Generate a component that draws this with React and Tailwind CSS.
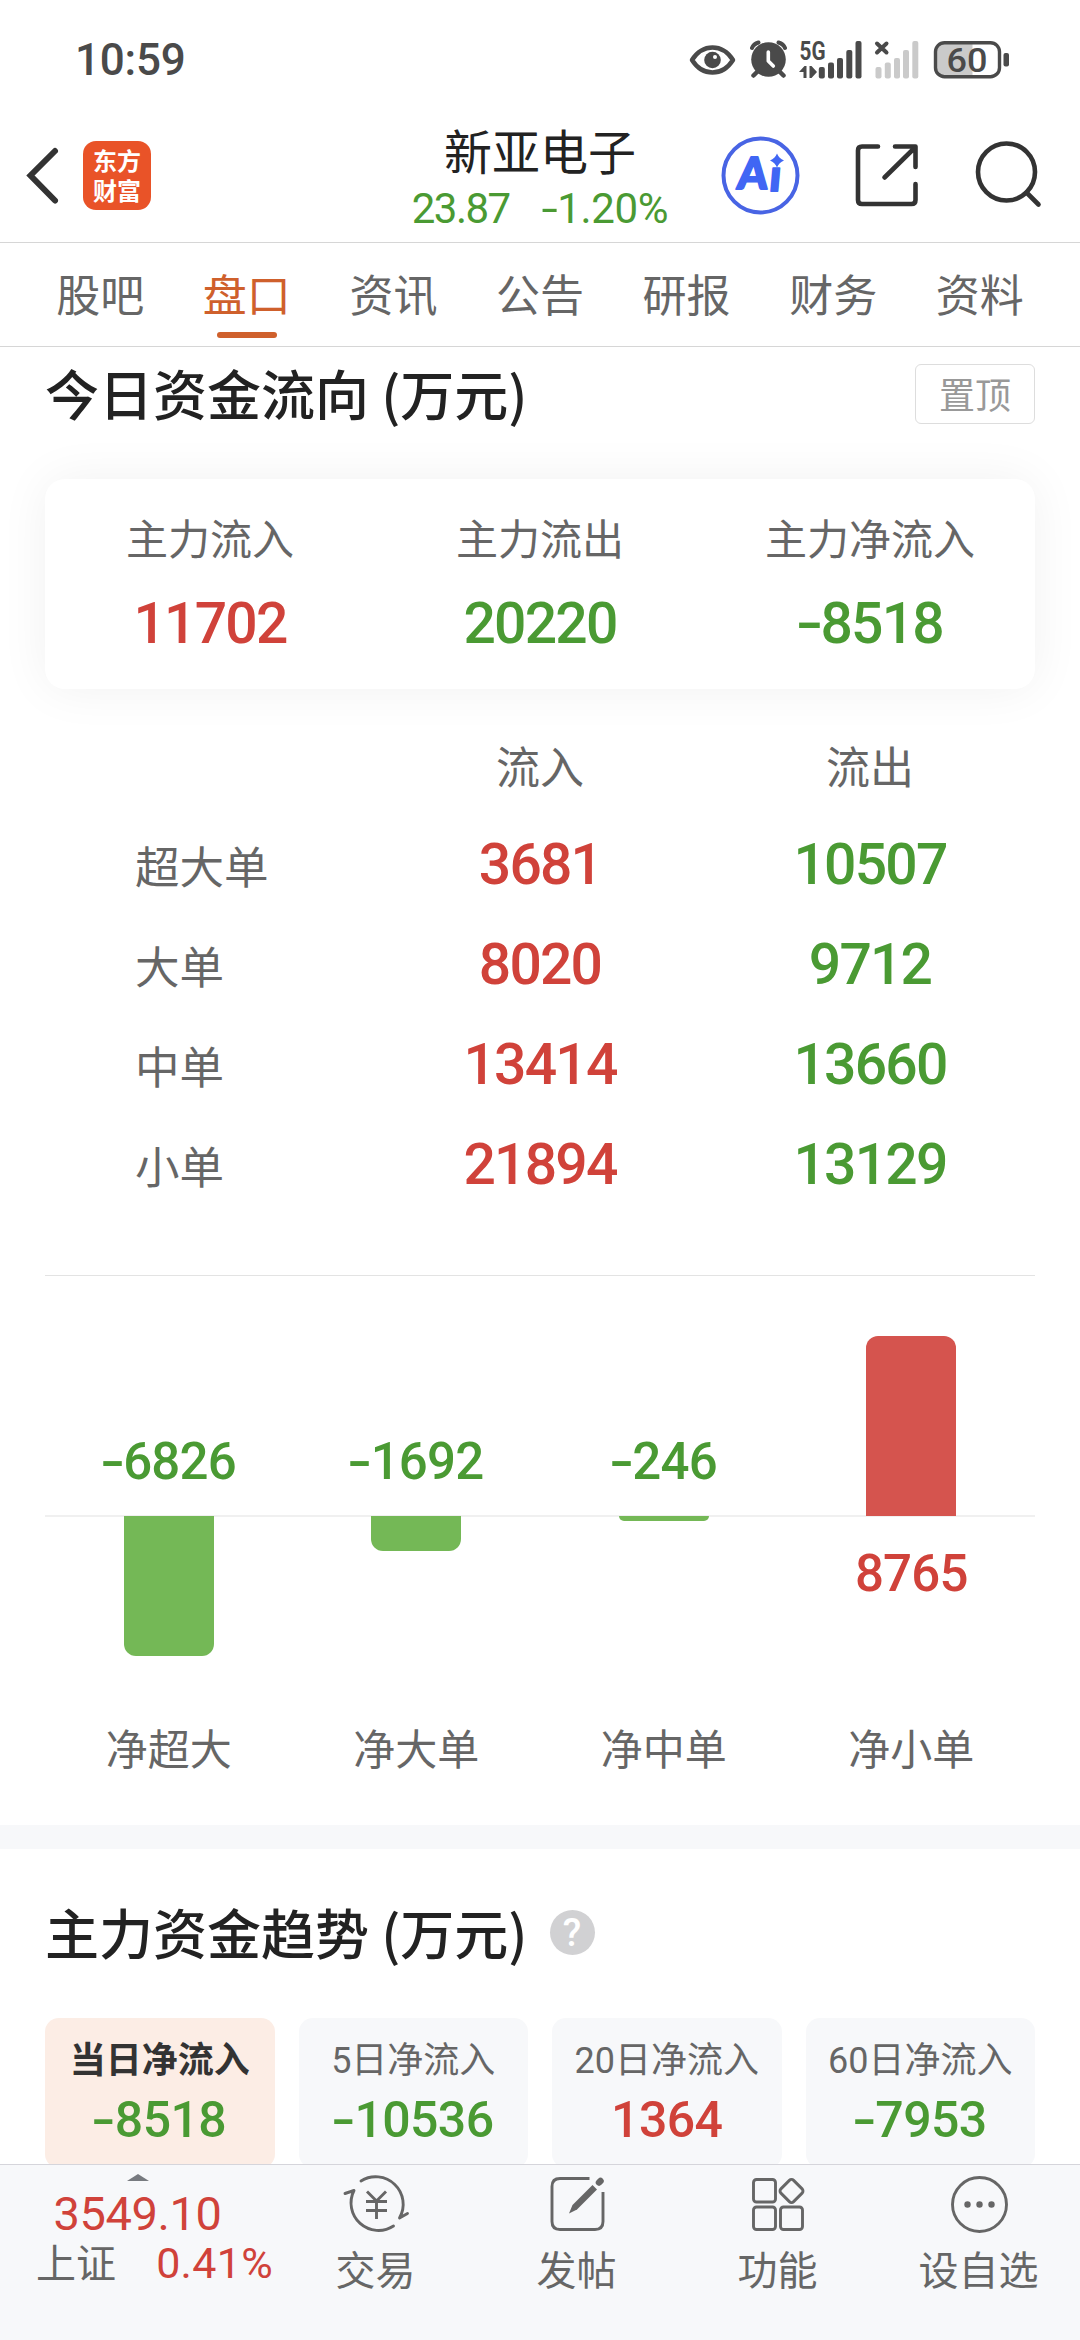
import clsx from "clsx";

const RED = "text-[#d0423a]";
const GREEN = "text-[#4a9a33]";

const tabs = ["股吧", "盘口", "资讯", "公告", "研报", "财务", "资料"];

const summary = [
  { label: "主力流入", value: "11702", up: true },
  { label: "主力流出", value: "20220", up: false },
  { label: "主力净流入", value: "-8518", up: false },
];

const orders = [
  { label: "超大单", inflow: "3681", outflow: "10507" },
  { label: "大单", inflow: "8020", outflow: "9712" },
  { label: "中单", inflow: "13414", outflow: "13660" },
  { label: "小单", inflow: "21894", outflow: "13129" },
];

const nets = [
  { label: "净超大", value: -6826, height: 140 },
  { label: "净大单", value: -1692, height: 35 },
  { label: "净中单", value: -246, height: 5 },
  { label: "净小单", value: 8765, height: 180 },
];

const trends = [
  { label: "当日净流入", value: "-8518", active: true },
  { label: "5日净流入", value: "-10536" },
  { label: "20日净流入", value: "1364", up: true },
  { label: "60日净流入", value: "-7953" },
];

// Roboto's hyphen is short, so the minus sign is widened a little
function Num({ children, className }) {
  const text = String(children);
  const negative = text.startsWith("-");
  return (
    <span className={clsx("font-['Roboto','Noto_Sans_CJK_SC',sans-serif] leading-none whitespace-nowrap", className)}>
      {negative && <span className="ml-[0.1em] inline-block origin-right scale-x-[1.4]">-</span>}
      {negative ? text.slice(1) : text}
    </span>
  );
}

function StatusBar() {
  return (
    <div className="flex h-[108px] items-start justify-between pl-[75px] pr-[70px] pt-[36px] text-[#4a4a4a]">
      <Num className="mt-[2px] text-[44px] font-medium tracking-[-0.2px]">10:59</Num>
      <svg className="h-[48px] w-[322px]" viewBox="688 36 322 48" fill="none">
        <path d="M692 60Q700 47.500 712.500 47.500T733 60Q725 72.500 712.500 72.500T692 60Z" stroke="#4a4a4a" strokeWidth="4.500" strokeLinejoin="round" />
        <circle cx="712.500" cy="60" r="8.300" fill="#4a4a4a" />
        <circle cx="715" cy="57" r="2" fill="#fff" />
        <g stroke="#4a4a4a" strokeLinecap="round">
          <path d="M752 48q1.500-4 6.500-5.500M785 48q-1.500-4-6.500-5.500" strokeWidth="4" />
          <path d="M758 71l-4.500 4.500M779 71l4.500 4.500" strokeWidth="4.500" />
        </g>
        <circle cx="768.500" cy="59.500" r="17.300" fill="#4a4a4a" />
        <path d="M768.300 52v9l5 5" stroke="#fff" strokeWidth="3.600" strokeLinecap="round" strokeLinejoin="round" />
        <text x="799.500" y="60" fontFamily="Roboto" fontWeight="700" fontSize="25.500" textLength="26" lengthAdjust="spacingAndGlyphs" fill="#4a4a4a">5G</text>
        <path d="M799 72l5.500-6h2v12h-3v-6zM809.500 66h2l5.500 6-5.500 6h-2z" fill="#4a4a4a" />
        <g fill="#4a4a4a">
          <rect x="818.800" y="67" width="6" height="11.500" rx="2" />
          <rect x="828" y="62.500" width="6" height="16" rx="2" />
          <rect x="837" y="58" width="6" height="20.500" rx="2" />
          <rect x="846.300" y="50" width="6" height="28.500" rx="2" />
          <rect x="855.500" y="41" width="6" height="37.500" rx="2" />
        </g>
        <path d="M877 43.500l9.500 9M886.500 43.500l-9.500 9" stroke="#4a4a4a" strokeWidth="4" strokeLinecap="round" />
        <g fill="#cacaca">
          <rect x="875.500" y="67" width="6" height="11.500" rx="2" />
          <rect x="884.800" y="62.500" width="6" height="16" rx="2" />
          <rect x="894" y="58" width="6" height="20.500" rx="2" />
          <rect x="903" y="50" width="6" height="28.500" rx="2" />
          <rect x="912.300" y="41" width="6" height="37.500" rx="2" />
        </g>
        <path d="M943 43h29.500v34h-29.500q-7 0-7-7v-20q0-7 7-7z" fill="#cacaca" />
        <rect x="935.500" y="42.700" width="64" height="34" rx="9" stroke="#4a4a4a" strokeWidth="3.400" />
        <rect x="1003.500" y="53" width="5.500" height="13.500" rx="2" fill="#4a4a4a" />
        <text x="946.500" y="71.500" fontFamily="Roboto" fontWeight="500" fontSize="34" textLength="41" lengthAdjust="spacingAndGlyphs" fill="#4a4a4a">60</text>
      </svg>
    </div>
  );
}

function Header() {
  return (
    <header className="flex h-[135px] items-start border-b border-[#d6d6d6]">
      <div className="flex w-[380px] items-center pl-[26px] pt-[33px]">
        <svg className="h-[68px] w-[34px]" viewBox="0 0 34 68" fill="none">
          <path d="M29 9L4.500 33.500l24.500 25" stroke="#333" strokeWidth="6" strokeLinecap="round" />
        </svg>
        <div className="ml-[23px] flex h-[69px] w-[68px] flex-col items-center justify-center rounded-[13px] bg-[#e95328] pb-[2px] text-[24px] font-bold leading-[30px] text-white">
          <span>东方</span>
          <span>财富</span>
        </div>
      </div>
      <div className="flex w-[320px] flex-col items-center pt-[16px]">
        <h1 className="text-[48px] leading-[50px] text-[#222]">新亚电子</h1>
        <div className={clsx("mt-[14px] flex gap-[32px] text-[42px]", GREEN)}>
          <Num className="tracking-[-1.5px]">23.87</Num>
          <Num className="tracking-[-0.3px]">-1.20%</Num>
        </div>
      </div>
      <svg className="h-[134px] w-[380px]" viewBox="700 108 380 134" fill="none">
        <circle cx="760.500" cy="175.500" r="37" stroke="#4864e4" strokeWidth="4" />
        <g fontFamily="Lato" fontWeight="900" fontSize="44" fill="#4066f4" stroke="#4066f4" strokeWidth="2" strokeLinejoin="round">
          <text transform="translate(736.500 189) skewX(-5)" textLength="30" lengthAdjust="spacingAndGlyphs">A</text>
          <text transform="translate(768.500 191) skewX(-5)">ı</text>
        </g>
        <path d="M777 153.500q2 5 7 7-5 2-7 7-2-5-7-7 5-2 7-7z" fill="#4066f4" />
        <g stroke="#333" strokeWidth="4.600" strokeLinecap="round" strokeLinejoin="round">
          <path d="M878 146.500h-16q-4 0-4 4v49.500q0 4 4 4h49.500q4 0 4-4V184M895 146.500h20.500V167M914 148.500L884.500 177.500" />
          <circle cx="1006.500" cy="172" r="28.500" />
          <path d="M1026.500 192.500L1038.500 204.500" />
        </g>
      </svg>
    </header>
  );
}

function Tabs() {
  return (
    <nav className="flex h-[104px] border-b border-[#d6d6d6] px-[27px]">
      {tabs.map((tab) => {
        const active = tab === "盘口";
        return (
          <div key={tab} className={clsx("flex flex-1 flex-col items-center pt-[26px] text-[44px] leading-[48px]", active ? "text-[#cf602c]" : "text-[#666]")}>
            {tab}
            {active && <span className="mt-[15px] h-[6px] w-[60px] rounded-full bg-[#cf602c]" />}
          </div>
        );
      })}
    </nav>
  );
}

function TodayFlow() {
  return (
    <section className="h-[1478px] px-[45px] pt-[17px]">
      <div className="flex h-[60px] items-center justify-between">
        <h2 className="-mt-[3px] text-[54px] font-medium leading-none text-[#222]">今日资金流向 (万元)</h2>
        <button className="h-[60px] w-[120px] rounded-[6px] border border-[#ddd] pb-[3px] text-[36px] leading-none text-[#999]">置顶</button>
      </div>

      <div className="mt-[55px] grid h-[210px] grid-cols-3 rounded-[20px] bg-white pt-[34px] shadow-[0_0_50px_rgba(0,0,0,0.06)]">
        {summary.map((item) => (
          <div key={item.label} className="flex flex-col items-center">
            <span className="text-[42px] leading-[48px] text-[#666]">{item.label}</span>
            <Num className={clsx("mt-[34px] text-[57px] font-medium tracking-[-1.8px]", item.up ? RED : GREEN)}>{item.value}</Num>
          </div>
        ))}
      </div>

      <div className="pt-[26px]">
        <div className="grid h-[100px] grid-cols-3 items-center text-center text-[44px] leading-none text-[#666]">
          <span />
          <span>流入</span>
          <span>流出</span>
        </div>
        {orders.map((row) => (
          <div key={row.label} className="grid h-[100px] grid-cols-3 items-center text-center">
            <span className="pl-[90px] text-left text-[44.5px] leading-none text-[#666]">{row.label}</span>
            <Num className={clsx("-mt-[2px] text-[57px] font-medium tracking-[-1.8px]", RED)}>{row.inflow}</Num>
            <Num className={clsx("-mt-[2px] text-[57px] font-medium tracking-[-1.8px]", GREEN)}>{row.outflow}</Num>
          </div>
        ))}
      </div>

      <div className="mt-[60px] border-t border-[#e3e3e3]">
        <div className="grid h-[241px] grid-cols-4 border-b-2 border-[#f0f0f0]">
          {nets.map((net) => (
            <div key={net.label} className="-mb-px flex flex-col items-center justify-end">
              {net.value > 0 ? (
                <div className="w-[90px] rounded-t-[12px] bg-[#d5544e]" style={{ height: net.height }} />
              ) : (
                <Num className={clsx("mb-[29px] text-[51px] font-medium tracking-[-0.8px]", GREEN)}>{net.value}</Num>
              )}
            </div>
          ))}
        </div>
        <div className="-mt-px grid h-[200px] grid-cols-4">
          {nets.map((net) => (
            <div key={net.label} className="flex flex-col items-center">
              {net.value > 0 ? (
                <Num className={clsx("mt-[32px] text-[51px] font-medium tracking-[-0.8px]", RED)}>{net.value}</Num>
              ) : (
                <div className="w-[90px] rounded-b-[12px] bg-[#74b856]" style={{ height: net.height }} />
              )}
            </div>
          ))}
        </div>
        <div className="mt-[7px] grid grid-cols-4 text-center text-[42px] leading-[48px] text-[#666]">
          {nets.map((net) => (
            <span key={net.label}>{net.label}</span>
          ))}
        </div>
      </div>
    </section>
  );
}

function Trend() {
  return (
    <section className="h-[339px] overflow-hidden border-t-[24px] border-[#f7f8fa] px-[45px] pt-[53px]">
      <div className="flex h-[60px] items-center">
        <h2 className="text-[54px] font-medium leading-none text-[#222]">主力资金趋势 (万元)</h2>
        <Num className="ml-[22px] flex h-[45px] w-[45px] items-center justify-center rounded-full bg-[#d1d1d3] pt-[2px] text-[38px] font-medium text-white">?</Num>
      </div>
      <div className="mt-[56px] grid grid-cols-4 gap-[24px]">
        {trends.map((item) => (
          <div key={item.label} className={clsx("flex h-[150px] flex-col items-center rounded-[14px] pt-[23px]", item.active ? "bg-[#fcede5]" : "bg-[#f7f8fa]")}>
            <span className={clsx("font-['Roboto','Noto_Sans_CJK_SC',sans-serif] text-[36px] leading-[40px] whitespace-nowrap", item.active ? "font-bold text-[#333]" : "text-[#666]")}>
              {item.label}
            </span>
            <Num className={clsx("mt-[14px] text-[50px] font-medium tracking-[-0.6px]", item.up ? RED : GREEN)}>{item.value}</Num>
          </div>
        ))}
      </div>
    </section>
  );
}

const actions = [
  {
    label: "交易",
    icon: (
      <>
        <path d="M15 7A27.500 27.500 0 0 1 53.500 44l8-4.500M-1 19.500L8 16.500A27.500 27.500 0 0 0 47.500 52" />
        <path d="M21 17.500l9.500 9.500L40 17.500M20 27.500h21M20 36.500h21M30.500 27v18" strokeLinecap="butt" />
      </>
    ),
  },
  {
    label: "发帖",
    icon: (
      <>
        <path d="M42.500 4.500H13q-8 0-8 8v35q0 8 8 8h35q8 0 8-8V18" strokeLinecap="butt" />
        <path d="M22 39.500l3.500-8.500L45.500 11l4.500 4.500L30 35.500z" fill="#666" stroke="none" />
        <path d="M52 8.500l1.500-1.500" strokeWidth="6.500" />
      </>
    ),
  },
  {
    label: "功能",
    icon: (
      <>
        <rect x="5.500" y="5.500" width="22" height="22.500" rx="3" />
        <rect x="5.500" y="33" width="22" height="22.500" rx="3" />
        <rect x="32.500" y="33" width="22" height="22.500" rx="3" />
        <rect x="34.500" y="8" width="18" height="18" rx="3" transform="rotate(45 43.500 17)" />
      </>
    ),
  },
  {
    label: "设自选",
    icon: (
      <>
        <circle cx="30.500" cy="30.500" r="27" />
        <g fill="#666" stroke="none">
          <circle cx="18.500" cy="30.500" r="3.200" />
          <circle cx="30.500" cy="30.500" r="3.200" />
          <circle cx="42.500" cy="30.500" r="3.200" />
        </g>
      </>
    ),
  },
];

function BottomBar() {
  return (
    <footer className="flex h-[176px] border-t border-[#d5d5db] bg-[#f7f8fa] text-[#666]">
      <div className="flex w-[275px] flex-col items-center">
        <svg className="mt-[9px] h-[7px] w-[22px]" viewBox="0 0 22 7">
          <path d="M0 7L11 0l11 7z" fill="#777a7f" />
        </svg>
        <Num className={clsx("mt-[9px] text-[47px] tracking-[-0.4px]", RED)}>3549.10</Num>
        <div className="-mt-px flex w-full items-center justify-between pl-[36px] pr-[2px]">
          <span className="text-[40px] leading-[46px]">上证</span>
          <Num className={clsx("mt-[6px] text-[43px] tracking-[0.3px]", RED)}>0.41%</Num>
        </div>
      </div>
      {actions.map((action) => (
        <div key={action.label} className="flex w-[201px] flex-col items-center pt-[9px]">
          <svg className="h-[60px] w-[60px] overflow-visible" viewBox="0 0 60 60" fill="none" stroke="#666" strokeWidth="2.900" strokeLinecap="round" strokeLinejoin="round">
            {action.icon}
          </svg>
          <span className="mt-[11px] text-[40px] leading-[46px]">{action.label}</span>
        </div>
      ))}
    </footer>
  );
}

export default function App() {
  return (
    <div className="h-[2340px] w-[1080px] overflow-hidden bg-white font-['Noto_Sans_CJK_SC',sans-serif]">
      <StatusBar />
      <Header />
      <Tabs />
      <TodayFlow />
      <Trend />
      <BottomBar />
    </div>
  );
}
